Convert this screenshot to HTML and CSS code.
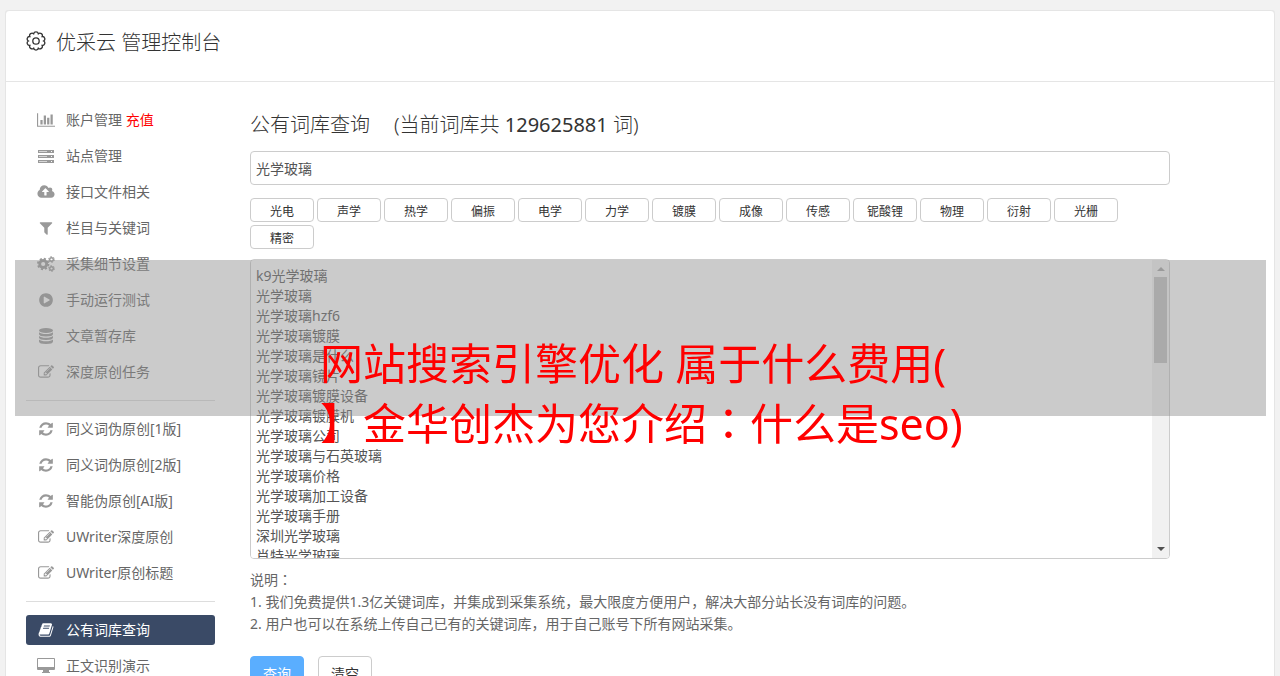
FILE: index.html
```html
<!DOCTYPE html>
<html lang="zh-CN">
<head>
    <meta charset="UTF-8">
    <meta name="viewport" content="width=device-width, initial-scale=1.0">
    <title>优采云 管理控制台</title>
    <link rel="stylesheet" href="styles.css">
</head>
<body>
    <!-- icons -->
    <svg class="sprite">
        <symbol id="i-chart" viewBox="0 0 2048 1792"><path d="M640 896v512h-256v-512h256zm384-512v1024h-256v-1024h256zm1024 1152v128h-2048v-1536h128v1408h1920zm-640-896v768h-256v-768h256zm384-384v1152h-256v-1152h256z"/></symbol>
        <symbol id="i-server" viewBox="0 0 18 16"><path fill-rule="evenodd" d="M1 2h16v3H1zM2 3v1h8V3zM14 3v1h1V3zM1 7h16v3H1zM2 8v1h8V8zM14 8v1h1V8zM1 12h16v3H1zM2 13v1h8v-1zM14 13v1h1v-1z"/><path opacity=".4" d="M2 3h8v1H2zM2 8h8v1H2zM2 13h8v1H2z"/></symbol>
        <symbol id="i-cloud" viewBox="0 0 1920 1792"><path d="M1280 864q0-14-9-23l-352-352q-9-9-23-9t-23 9l-351 351q-10 12-10 24 0 14 9 23t23 9h224v352q0 13 9.500 22.500t22.500 9.500h192q13 0 22.500-9.500t9.500-22.500v-352h224q13 0 22.500-9.500t9.500-22.500zm640 288q0 159-112.500 271.500t-271.500 112.500h-1088q-185 0-316.500-131.500t-131.500-316.500q0-130 70-240t188-165q-2-30-2-43 0-212 150-362t362-150q156 0 285.500 87t188.500 231q71-62 166-62 106 0 181 75t75 181q0 76-41 138 130 31 213.500 135.500t83.500 238.500z"/></symbol>
        <symbol id="i-filter" viewBox="0 0 1792 1792"><path d="M1595 295q17 41-14 70l-493 493v742q0 42-39 59-13 5-25 5-27 0-45-19l-256-256q-19-19-19-45v-486l-493-493q-31-29-14-70 17-39 59-39h1280q42 0 59 39z"/></symbol>
        <symbol id="i-cogs" viewBox="0 0 18 16"><g fill="none" stroke="currentColor"><circle cx="6.200" cy="8" r="3.500" stroke-width="2.800"/><circle cx="6.200" cy="8" r="5.300" stroke-width="1.800" stroke-dasharray="2.160 2"/><circle cx="14.500" cy="3.500" r="1.800" stroke-width="1.400"/><circle cx="14.500" cy="3.500" r="2.900" stroke-width="1" stroke-dasharray="1.500 1.540"/><circle cx="14.500" cy="12.500" r="1.800" stroke-width="1.400"/><circle cx="14.500" cy="12.500" r="2.900" stroke-width="1" stroke-dasharray="1.500 1.540"/></g></symbol>
        <symbol id="i-play" viewBox="0 0 1792 1792"><path d="M896 128q209 0 385.500 103t279.500 279.500 103 385.500-103 385.500-279.500 279.500-385.500 103-385.500-103-279.500-279.500-103-385.500 103-385.500 279.500-279.500 385.500-103zm384 823q32-18 32-55t-32-55l-544-320q-31-19-64-1-32 19-32 56v640q0 37 32 56 16 8 32 8 17 0 32-9z"/></symbol>
        <symbol id="i-database" viewBox="0 0 16 16"><ellipse cx="8" cy="2.500" rx="7" ry="2.500"/><path d="M1 4.200q2 1.800 7 1.800t7-1.800v1.800q0 2.500-7 2.500t-7-2.500zM1 7.900q2 1.800 7 1.800t7-1.800v1.600q0 2.500-7 2.500t-7-2.500zM1 11.500q2 1.800 7 1.800t7-1.800v2q0 2.500-7 2.500t-7-2.500z"/></symbol>
        <symbol id="i-edit" viewBox="0 0 1792 1792"><path d="M888 1184l116-116-152-152-116 116v56h96v96h56zm440-720q-16-16-33 1l-350 350q-17 17-1 33t33-1l350-350q17-17 1-33zm80 594v190q0 119-84.500 203.500t-203.500 84.500h-832q-119 0-203.500-84.500t-84.500-203.500v-832q0-119 84.500-203.500t203.500-84.500h832q63 0 117 25 15 7 18 23 3 17-9 29l-49 49q-14 14-32 8-23-6-45-6h-832q-66 0-113 47t-47 113v832q0 66 47 113t113 47h832q66 0 113-47t47-113v-126q0-13 9-22l64-64q15-15 35-7t20 29zm-96-738l288 288-672 672h-288v-288zm444 132l-92 92-288-288 92-92q28-28 68-28t68 28l152 152q28 28 28 68t-28 68z"/></symbol>
        <symbol id="i-refresh" viewBox="0 0 1792 1792"><path d="M1639 1056q0 5-1 7-64 268-268 434.500t-478 166.500q-146 0-282.500-55t-243.500-157l-129 129q-19 19-45 19t-45-19-19-45v-448q0-26 19-45t45-19h448q26 0 45 19t19 45-19 45l-137 137q71 66 161 102t187 36q134 0 250-65t186-179q11-17 53-117 8-23 30-23h192q13 0 22.500 9.500t9.500 22.500zm25-800v448q0 26-19 45t-45 19h-448q-26 0-45-19t-19-45 19-45l138-138q-148-137-349-137-134 0-250 65t-186 179q-11 17-53 117-8 23-30 23h-199q-13 0-22.500-9.500t-9.500-22.500v-7q65-268 270-434.500t480-166.500q146 0 284 55.500t245 156.500l130-129q19-19 45-19t45 19 19 45z"/></symbol>
        <symbol id="i-book" viewBox="0 0 1792 1792"><path d="M1703 478q40 57 18 129l-275 906q-19 64-76.500 107.500t-122.500 43.500h-923q-77 0-148.500-53.500t-99.500-131.500q-24-67-2-127 0-4 3-27t4-37q1-8-3-21.500t-3-19.500q2-11 8-21t16.500-23.500 16.500-23.500q23-38 45-91.500t30-91.500q3-10 .5-30t-.5-28q3-11 17-28t17-23q21-36 42-92t25-90q1-9-2.500-32t.5-28q4-13 22-30.500t22-22.500q19-26 42.500-84.500t27.500-96.500q1-8-3-25.500t-2-26.500q2-8 9-18t18-23 17-21q8-12 16.500-30.500t15-35 16-36 19.500-32 26.500-23.500 36-11.500 47.500 5.500l-1 3q38-9 51-9h761q74 0 114 56t18 130l-274 906q-36 119-71.500 153.500t-128.500 34.500h-869q-27 0-38 15-11 16-1 43 24 70 144 70h923q29 0 56-15.500t35-41.500l300-987q7-22 5-57 38 15 59 43zm-1064 2q-4 13 2 22.500t20 9.500h608q13 0 25.500-9.500t16.500-22.500l21-64q4-13-2-22.500t-20-9.500h-608q-13 0-25.500 9.500t-16.500 22.500zm-83 256q-4 13 2 22.500t20 9.500h608q13 0 25.500-9.500t16.500-22.500l21-64q4-13-2-22.500t-20-9.500h-608q-13 0-25.500 9.500t-16.500 22.500z"/></symbol>
        <symbol id="i-desktop" viewBox="0 0 18 16"><path fill-rule="evenodd" d="M1 0h16q1 0 1 1v10q0 1-1 1h-5v2h1v1H5v-1h1v-2H1q-1 0-1-1V1q0-1 1-1zM1 1v8h16V1z"/></symbol>
    </svg>

    <div class="card">
        <header class="header">
            <svg class="logo" viewBox="-10 -10 20 20"><path d="M7.600 0A2.400 2.400 0 0 1 6.150 4.470A2.400 2.400 0 0 1 2.350 7.230A2.400 2.400 0 0 1 -2.350 7.230A2.400 2.400 0 0 1 -6.150 4.470A2.400 2.400 0 0 1 -7.600 0A2.400 2.400 0 0 1 -6.150 -4.470A2.400 2.400 0 0 1 -2.350 -7.230A2.400 2.400 0 0 1 2.350 -7.230A2.400 2.400 0 0 1 6.150 -4.470A2.400 2.400 0 0 1 7.600 0Z"/><circle r="3.200"/></svg>
            <h1>优采云 管理控制台</h1>
        </header>
        <div class="content">
            <nav class="sidebar">
                <a href="#"><svg><use href="#i-chart"/></svg><span>账户管理 <span class="red">充值</span></span></a>
                <a href="#"><svg><use href="#i-server"/></svg>站点管理</a>
                <a href="#"><svg><use href="#i-cloud"/></svg>接口文件相关</a>
                <a href="#"><svg><use href="#i-filter"/></svg>栏目与关键词</a>
                <a href="#"><svg><use href="#i-cogs"/></svg>采集细节设置</a>
                <a href="#"><svg><use href="#i-play"/></svg>手动运行测试</a>
                <a href="#"><svg><use href="#i-database"/></svg>文章暂存库</a>
                <a href="#"><svg><use href="#i-edit"/></svg>深度原创任务</a>
                <hr>
                <a href="#"><svg><use href="#i-refresh"/></svg>同义词伪原创[1版]</a>
                <a href="#"><svg><use href="#i-refresh"/></svg>同义词伪原创[2版]</a>
                <a href="#"><svg><use href="#i-refresh"/></svg>智能伪原创[AI版]</a>
                <a href="#"><svg><use href="#i-edit"/></svg>UWriter深度原创</a>
                <a href="#"><svg><use href="#i-edit"/></svg>UWriter原创标题</a>
                <hr>
                <a href="#" class="active"><svg><use href="#i-book"/></svg>公有词库查询</a>
                <a href="#"><svg><use href="#i-desktop"/></svg>正文识别演示</a>
            </nav>
            <main class="main">
                <h2><label for="word">公有词库查询</label> <span>(当前词库共 <span class="count">129625881</span> 词)</span></h2>
                <input type="text" id="word" class="word" value="光学玻璃">
                <div class="tags">
                    <button>光电</button>
                    <button>声学</button>
                    <button>热学</button>
                    <button>偏振</button>
                    <button>电学</button>
                    <button>力学</button>
                    <button>镀膜</button>
                    <button>成像</button>
                    <button>传感</button>
                    <button>铌酸锂</button>
                    <button>物理</button>
                    <button>衍射</button>
                    <button>光栅</button>
                    <button>精密</button>
                </div>
                <div class="result">
                    <textarea aria-label="查询结果">k9光学玻璃
光学玻璃
光学玻璃hzf6
光学玻璃镀膜
光学玻璃是什么
光学玻璃镜片
光学玻璃镀膜设备
光学玻璃镀膜机
光学玻璃公司
光学玻璃与石英玻璃
光学玻璃价格
光学玻璃加工设备
光学玻璃手册
深圳光学玻璃
肖特光学玻璃</textarea>
                    <div class="scrollbar">
                        <i class="up"></i>
                        <i class="thumb"></i>
                        <i class="down"></i>
                    </div>
                </div>
                <p class="note">说明<span class="mid" lang="zh-TW">：</span><br>1. 我们免费提供1.3亿关键词库，并集成到采集系统，最大限度方便用户，解决大部分站长没有词库的问题。<br>2. 用户也可以在系统上传自己已有的关键词库，用于自己账号下所有网站采集。</p>
                <div class="buttons">
                    <button class="primary">查询</button>
                    <button>清空</button>
                </div>
            </main>
        </div>
    </div>

    <div class="banner">
        <p>网站搜索引擎优化 属于什么费用(<br>】金华创杰为您介绍<span class="mid" lang="zh-TW">：</span>什么是seo)</p>
    </div>
</body>
</html>
```
FILE: styles.css
```css
* {
    box-sizing: border-box;
}
body {
    margin: 10px 5px 0;
    background-color: #f2f2f2;
    font-family: "Noto Sans", "Noto Sans CJK SC", sans-serif;
    font-size: 14px;
    color: #666;
}
button, input, textarea {
    font-family: inherit;
    font-size: 14px;
}
.sprite {
    display: none;
}
.card {
    background-color: #fff;
    border: 1px solid #e5e5e5;
    border-radius: 4px;
    box-shadow: 0 0 1px #e0e0e0;
}
.header {
    display: flex;
    align-items: center;
    gap: 10px;
    height: 71px;
    padding: 0 20px 10px;
    border-bottom: 1px solid #e5e5e5;
}
.header h1 {
    margin: 0;
    font-size: 20px;
    font-weight: 300;
    color: #333;
}
.logo {
    width: 20px;
    height: 20px;
    fill: none;
    stroke: #333;
    stroke-width: 1.3;
}
.content {
    display: flex;
    gap: 35px;
    padding: 23px 20px;
}
.sidebar {
    flex: 0 0 189px;
}
.sidebar a {
    display: flex;
    align-items: center;
    gap: 11px;
    height: 30px;
    margin-bottom: 6px;
    padding-left: 11px;
    border-radius: 3px;
    line-height: 18px;
    color: #666;
    text-decoration: none;
}
.sidebar svg {
    width: 18px;
    height: 16px;
    fill: currentColor;
    color: #999;
}
.sidebar hr {
    margin: 13px 0;
    border: 0;
    border-top: 1px solid #ddd;
}
.sidebar a:has(+ hr) {
    margin-bottom: 0;
}
.sidebar .active {
    background-color: #3a4a66;
    color: #fff;
}
.sidebar .active svg {
    color: #fff;
}
.red {
    color: #f00;
}
.main {
    flex: 1;
    max-width: 920px;
}
.main h2 {
    display: flex;
    gap: 24px;
    margin: 5px 0 11px;
    font-size: 20px;
    line-height: 30px;
    font-weight: 300;
    color: #333;
}
.count {
    font-weight: 400;
}
.word {
    display: block;
    width: 100%;
    height: 34px;
    padding: 0 5px;
    border: 1px solid #ccc;
    border-radius: 4px;
    color: #555;
}
.tags {
    display: flex;
    flex-wrap: wrap;
    gap: 3px;
    margin: 13px 0 10px;
}
.tags button {
    width: 64px;
    height: 24px;
    padding: 2px 0 0;
    background-color: #fff;
    border: 1px solid #ccc;
    border-radius: 4px;
    font-size: 12px;
    color: #333;
}
.result {
    display: flex;
    height: 300px;
    border: 1px solid #ccc;
    border-radius: 4px;
    overflow: hidden;
}
.result textarea {
    flex: 1;
    padding: 6px 5px;
    border: 0;
    line-height: 20px;
    color: #555;
    resize: none;
    scrollbar-width: none;
}
.scrollbar {
    display: flex;
    flex-direction: column;
    align-items: center;
    width: 17px;
    padding: 7px 2px;
    background-color: #f1f1f1;
}
.scrollbar .up {
    border: 4px solid transparent;
    border-top: 0;
    border-bottom-color: #a3a3a3;
}
.scrollbar .thumb {
    width: 13px;
    height: 86px;
    margin: 6px 0 auto;
    background-color: #c1c1c1;
}
.scrollbar .down {
    border: 4px solid transparent;
    border-bottom: 0;
    border-top-color: #505050;
}
.note {
    margin: 10px 0 21px;
    line-height: 22px;
}
.buttons {
    display: flex;
    gap: 14px;
}
.buttons button {
    width: 54px;
    height: 34px;
    padding: 0;
    background-color: #fff;
    border: 1px solid #ccc;
    border-radius: 4px;
    color: #333;
}
.buttons .primary {
    background-color: #5aaeff;
    border-color: #5aaeff;
    color: #fff;
}
/* banner over the page */
.banner {
    position: absolute;
    top: 260px;
    left: 15px;
    right: 14px;
    height: 156px;
    padding: 74px 0 0 305px;
    background-color: rgba(145, 145, 145, 0.47);
}
.banner p {
    margin: 0;
    font-size: 43px;
    line-height: 60px;
    color: #f00;
    white-space: nowrap;
}
/* centred punctuation */
.mid {
    font-family: "Noto Sans", "Noto Sans CJK TC", sans-serif;
}
```
